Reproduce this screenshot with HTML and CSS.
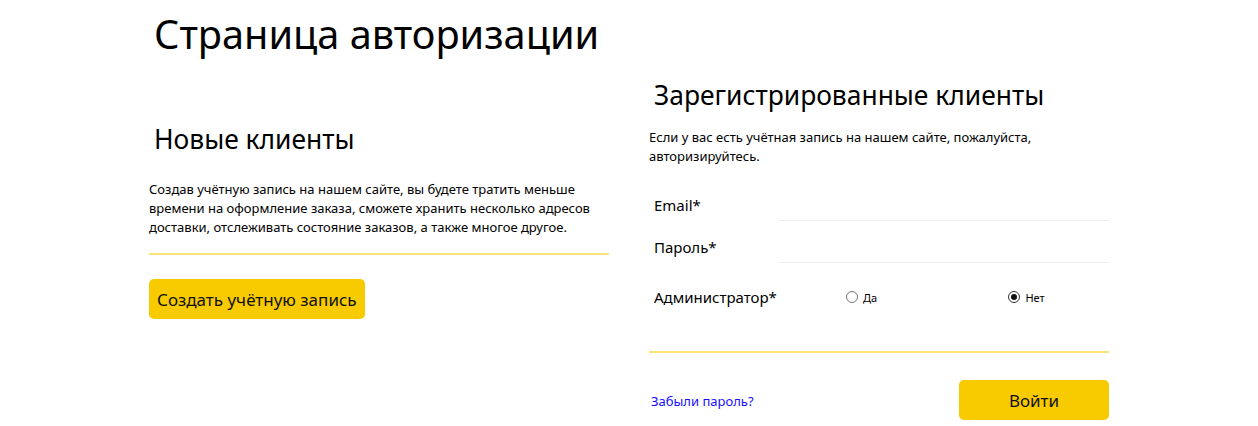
FILE: index.html
```html
<!DOCTYPE html>
<html lang="ru">
<head>
<meta charset="utf-8">
<title>Страница авторизации</title>
<link rel="stylesheet" href="styles.css">
</head>
<body>
<div class="page">
  <h1 class="page-title">Страница авторизации</h1>
  <div class="columns">
    <section class="col col-new">
      <h2 class="col-title">Новые клиенты</h2>
      <p class="col-text">Создав учётную запись на нашем сайте, вы будете тратить меньше времени на оформление заказа, сможете хранить несколько адресов доставки, отслеживать состояние заказов, а также многое другое.</p>
      <hr class="divider">
      <button class="btn btn-create" type="button">Создать учётную запись</button>
    </section>
    <section class="col col-login">
      <h2 class="col-title">Зарегистрированные клиенты</h2>
      <p class="col-text">Если у вас есть учётная запись на нашем сайте, пожалуйста, авторизируйтесь.</p>
      <form class="login-form">
        <div class="field">
          <label class="field-label" for="email">Email*</label>
          <input class="field-input" id="email" type="email">
        </div>
        <div class="field">
          <label class="field-label" for="pass">Пароль*</label>
          <input class="field-input" id="pass" type="password">
        </div>
        <div class="field field-radio">
          <span class="field-label">Администратор*</span>
          <div class="radios">
            <label class="radio"><input type="radio" name="admin" value="yes"><span>Да</span></label>
            <label class="radio"><input type="radio" name="admin" value="no" checked><span>Нет</span></label>
          </div>
        </div>
        <hr class="divider divider-form">
        <div class="form-footer">
          <a class="forgot" href="#">Забыли пароль?</a>
          <button class="btn btn-login" type="button">Войти</button>
        </div>
      </form>
    </section>
  </div>
</div>
</body>
</html>
```

FILE: styles.css
```css
* { box-sizing: border-box; }

body {
  margin: 0;
  background: #fff;
  color: #000;
  font-family: "Noto Sans", "Open Sans", sans-serif;
}

.page {
  width: 960px;
  margin: 0 auto;
}

.page-title {
  margin: 0;
  padding: 8px 0 0 5px;
  font-size: 39.7px;
  font-weight: 400;
  line-height: 52px;
}

.columns {
  display: grid;
  grid-template-columns: 460px 460px;
  column-gap: 40px;
}

.col-title {
  margin: 0;
  padding-left: 5px;
  font-size: 26.4px;
  font-weight: 400;
  line-height: 34px;
}

.col-new { padding-top: 62px; }
.col-login { padding-top: 18px; }

.col-text {
  margin: 0;
  font-size: 13px;
  line-height: 19px;
}

.col-new .col-text { margin-top: 24px; }
.col-login .col-text { margin-top: 16px; }

.divider {
  margin: 0;
  border: 0;
  height: 2px;
  background: #fde27a;
}

.col-new .divider { margin-top: 16px; }

.btn {
  border: 0;
  border-radius: 5px;
  background: #f8ca00;
  color: #111;
  font-family: inherit;
  font-size: 17px;
  cursor: pointer;
}

.btn-create {
  margin-top: 24px;
  height: 40px;
  padding: 0 8px;
}

.login-form {
  margin-top: 13px;
}

.field {
  display: flex;
  align-items: flex-end;
  height: 42px;
}

.field-label {
  width: 130px;
  padding-left: 5px;
  padding-bottom: 6px;
  font-size: 15px;
  line-height: 20px;
}

.field-input {
  flex: 1;
  height: 30px;
  border: 0;
  border-bottom: 1px solid #eeeeee;
  outline: none;
  background: transparent;
}

.field-radio {
  height: 50px;
  align-items: center;
}

.field-radio .field-label {
  padding-bottom: 0;
  padding-top: 18px;
}

.radios {
  flex: 1;
  display: grid;
  grid-template-columns: 1fr 1fr;
  padding-top: 18px;
}

.radio {
  display: flex;
  align-items: center;
  justify-content: center;
  gap: 5px;
  font-size: 11px;
}

.radio input {
  appearance: none;
  margin: 0;
  width: 12px;
  height: 12px;
  border: 1px solid #777;
  border-radius: 50%;
  background: #fff;
  position: relative;
}

.radio input:checked {
  border-color: #333;
}

.radio input:checked::after {
  content: "";
  position: absolute;
  left: 2px;
  top: 2px;
  width: 6px;
  height: 6px;
  border-radius: 50%;
  background: #111;
}

.divider-form {
  margin-top: 38px;
}

.form-footer {
  display: flex;
  align-items: center;
  justify-content: space-between;
  margin-top: 27px;
}

.forgot {
  padding-left: 2px;
  padding-top: 2px;
  font-size: 13px;
  color: #1a0dff;
  text-decoration: none;
}

.btn-login {
  width: 150px;
  height: 40px;
}
```
